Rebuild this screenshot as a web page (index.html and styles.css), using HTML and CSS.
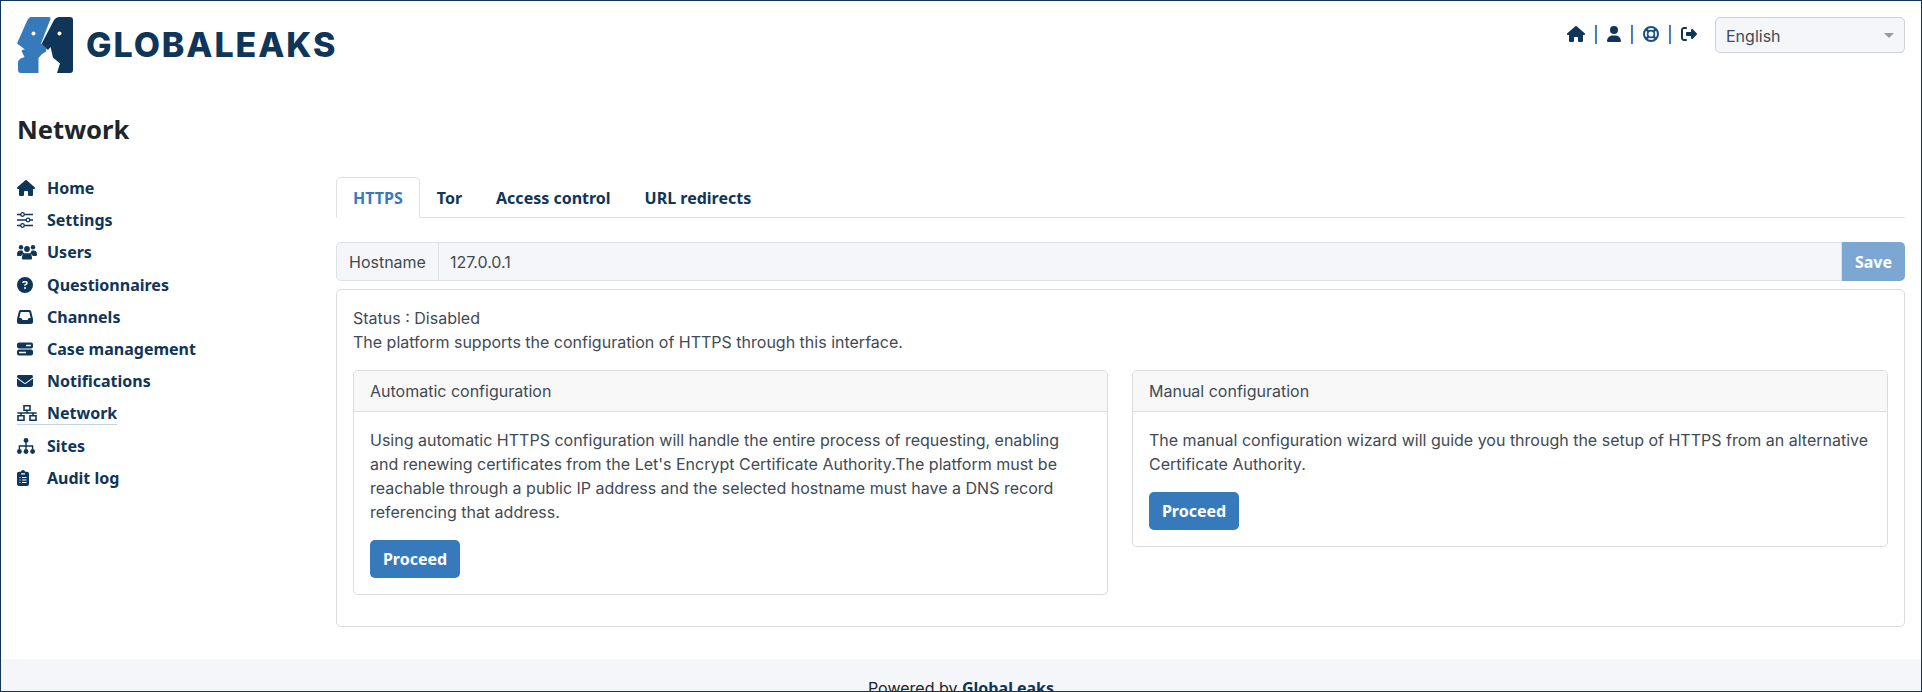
FILE: index.html
```html
<!DOCTYPE html>
<html lang="en">
<head>
<meta charset="utf-8">
<title>GlobaLeaks - Network</title>
<link rel="stylesheet" href="styles.css">
</head>
<body>
<div class="page">
  <header class="topbar">
    <a class="brand">
      <svg class="logo" viewBox="17 17 56 56" aria-hidden="true">
        <path class="logo-blue" d="M31 17H49Q51 17 50.500 19L41 43.500 46.500 48.500 46 51.500 41.500 54.500 38.500 58V73H21Q18 73 18 70V63.500Q18 60 20.500 58.500L24.500 57 21.500 51Q22 49 25 49.500L17 43.500 27 21Q29 17 31 17Z"/>
        <path class="logo-dark" d="M60 17H70Q73 17 73 20V70Q73 73 70 73H57L60 63.500 53 57.500 50.500 47 48 50 41.500 44 53 22Q55 17 60 17Z"/>
        <circle class="logo-eye" cx="33.500" cy="33.500" r="2"/>
        <circle class="logo-eye" cx="59.500" cy="33.500" r="2"/>
      </svg>
      <span class="brand-name">GLOBALEAKS</span>
    </a>
    <div class="tools">
      <nav class="tool-links">
        <svg class="ti ti-home" viewBox="0 0 576 512"><path d="M575.800 255.500c0 18-15 32.100-32 32.100h-32l.7 160.200c0 2.700-.2 5.400-.5 8.100V472c0 22.100-17.900 40-40 40H456c-1.100 0-2.200 0-3.300-.1c-1.400 .1-2.800 .1-4.200 .1H416 392c-22.100 0-40-17.900-40-40V448 384c0-17.700-14.300-32-32-32H256c-17.700 0-32 14.300-32 32v64 24c0 22.100-17.900 40-40 40H160 128.100c-1.500 0-3-.1-4.500-.2c-1.200 .1-2.400 .2-3.600 .2H104c-22.100 0-40-17.900-40-40V360c0-.9 0-1.900 .1-2.800V287.600H32c-18 0-32-14-32-32.100c0-9 3-17 10-24L266.400 8c7-7 15-8 22-8s15 2 21 7L564.800 231.500c8 7 12 15 11 24z"/></svg>
        <span class="sep">|</span>
        <svg class="ti ti-user" viewBox="0 0 448 512"><path d="M224 256A128 128 0 1 0 224 0a128 128 0 1 0 0 256zm-45.700 48C79.800 304 0 383.800 0 482.300C0 498.700 13.300 512 29.700 512H418.300c16.400 0 29.700-13.300 29.700-29.700C448 383.800 368.200 304 269.700 304H178.300z"/></svg>
        <span class="sep">|</span>
        <svg class="ti ti-ring" viewBox="0 0 16 16"><circle class="st-blue" cx="8" cy="8" r="7" stroke-width="2"/><circle class="st-blue" cx="8" cy="8" r="3.400" stroke-width="1.700"/><path class="st-blue" stroke-width="2.400" d="M3.300 3.300 5.700 5.700M12.700 3.300 10.300 5.700M3.300 12.700 5.700 10.300M12.700 12.700 10.300 10.300"/></svg>
        <span class="sep">|</span>
        <svg class="ti ti-exit" viewBox="0 0 512 512"><path d="M377.900 105.900L500.700 228.700c7.200 7.200 11.300 17.100 11.300 27.300s-4.100 20.100-11.300 27.300L377.900 406.100c-6.400 6.400-15 9.900-24 9.900c-18.700 0-33.900-15.200-33.900-33.900l0-62.100-128 0c-17.700 0-32-14.300-32-32l0-64c0-17.700 14.300-32 32-32l128 0 0-62.100c0-18.700 15.200-33.900 33.900-33.900c9 0 17.600 3.600 24 9.900zM160 96L96 96c-17.700 0-32 14.300-32 32l0 256c0 17.700 14.300 32 32 32l64 0c17.700 0 32 14.300 32 32s-14.300 32-32 32l-64 0c-53 0-96-43-96-96L0 128C0 75 43 32 96 32l64 0c17.700 0 32 14.300 32 32s-14.300 32-32 32z"/></svg>
      </nav>
      <div class="lang">English<span class="caret"></span></div>
    </div>
  </header>

  <h1 class="title">Network</h1>

  <div class="layout">
    <ul class="side">
      <li><a class="side-link"><span class="si"><svg width="18" height="16" viewBox="0 0 576 512"><path d="M575.800 255.500c0 18-15 32.100-32 32.100h-32l.7 160.200c0 2.700-.2 5.400-.5 8.100V472c0 22.100-17.900 40-40 40H456c-1.100 0-2.200 0-3.300-.1c-1.400 .1-2.800 .1-4.200 .1H416 392c-22.100 0-40-17.900-40-40V448 384c0-17.700-14.300-32-32-32H256c-17.700 0-32 14.300-32 32v64 24c0 22.100-17.900 40-40 40H160 128.100c-1.500 0-3-.1-4.500-.2c-1.200 .1-2.400 .2-3.600 .2H104c-22.100 0-40-17.900-40-40V360c0-.9 0-1.900 .1-2.800V287.600H32c-18 0-32-14-32-32.100c0-9 3-17 10-24L266.400 8c7-7 15-8 22-8s15 2 21 7L564.800 231.500c8 7 12 15 11 24z"/></svg></span>Home</a></li>
      <li><a class="side-link"><span class="si"><svg width="16" height="16" viewBox="0 0 16 16"><path class="st" stroke-width="1.400" d="M0 2.500H3.500M7.500 2.500H16M0 8H9M13 8H16M0 13.500H3.500M7.500 13.500H16"/><circle class="st" cx="5.500" cy="2.500" r="1.800" stroke-width="1.300"/><circle class="st" cx="11" cy="8" r="1.800" stroke-width="1.300"/><circle class="st" cx="5.500" cy="13.500" r="1.800" stroke-width="1.300"/></svg></span>Settings</a></li>
      <li><a class="side-link"><span class="si"><svg width="20" height="16" viewBox="0 0 20 16"><circle cx="4" cy="3.200" r="2.200"/><circle cx="16" cy="3.200" r="2.200"/><circle cx="10" cy="5" r="2.900"/><path d="M0 10C0 7.500 1.500 6.500 3.500 6.500H5.500C5.800 8 6.500 9 7.500 9.500 5.500 10 4.500 11 4.300 12H1Q0 12 0 11ZM20 10C20 7.500 18.500 6.500 16.500 6.500H14.500C14.200 8 13.500 9 12.500 9.500 14.500 10 15.500 11 15.700 12H19Q20 12 20 11ZM8 9.200H12C14 9.200 15 11 15 14.500Q15 15.500 14 15.500H6Q5 15.500 5 14.500C5 11 6 9.200 8 9.200Z"/></svg></span>Users</a></li>
      <li><a class="side-link"><span class="si"><svg width="16" height="16" viewBox="0 0 512 512"><path d="M256 512A256 256 0 1 0 256 0a256 256 0 1 0 0 512zM169.800 165.300c7.900-22.300 29.100-37.300 52.800-37.300h58.300c34.900 0 63.100 28.300 63.100 63.100c0 22.600-12.100 43.500-31.700 54.800L280 264.400c-.2 13-10.900 23.600-24 23.600c-13.300 0-24-10.700-24-24V250.500c0-8.600 4.600-16.500 12.100-20.800l44.300-25.400c4.700-2.700 7.600-7.700 7.600-13.100c0-8.400-6.800-15.100-15.100-15.100H222.600c-3.400 0-6.400 2.100-7.500 5.300l-.4 1.200c-4.400 12.500-18.200 19-30.600 14.600s-19-18.200-14.600-30.600l.4-1.200zM224 352a32 32 0 1 1 64 0 32 32 0 1 1 -64 0z"/></svg></span>Questionnaires</a></li>
      <li><a class="side-link"><span class="si"><svg width="16" height="16" viewBox="0 0 512 512"><path d="M121 32C91.600 32 66 52 58.900 80.500L1.900 308.400C.6 313.500 0 318.700 0 323.900V416c0 35.300 28.700 64 64 64H448c35.300 0 64-28.700 64-64V323.900c0-5.200-.6-10.400-1.900-15.500l-57-227.900C446 52 420.400 32 391 32H121zm0 64H391l48 192H387.800c-12.100 0-23.200 6.800-28.600 17.700l-14.300 28.600c-5.400 10.800-16.500 17.700-28.600 17.700H195.800c-12.100 0-23.200-6.800-28.600-17.700l-14.300-28.600c-5.400-10.800-16.500-17.700-28.600-17.700H73L121 96z"/></svg></span>Channels</a></li>
      <li><a class="side-link"><span class="si"><svg width="16" height="16" viewBox="0 0 16 16"><path d="M2 1.500H14Q16 1.500 16 3.500V5.500Q16 7.500 14 7.500H2Q0 7.500 0 5.500V3.500Q0 1.500 2 1.500ZM2 8.500H14Q16 8.500 16 10.500V12.500Q16 14.500 14 14.500H2Q0 14.500 0 12.500V10.500Q0 8.500 2 8.500Z"/><path class="wst" stroke-width="1.300" d="M9 4.500H14M2 11.500H9"/></svg></span>Case management</a></li>
      <li><a class="side-link"><span class="si"><svg width="16" height="16" viewBox="0 0 512 512"><path d="M48 64C21.500 64 0 85.500 0 112c0 15.100 7.100 29.300 19.200 38.400L236.800 313.600c11.400 8.500 27 8.500 38.400 0L492.800 150.400c12.100-9.100 19.200-23.300 19.200-38.400c0-26.500-21.500-48-48-48H48zM0 176V384c0 35.300 28.700 64 64 64H448c35.300 0 64-28.700 64-64V176L294.400 339.200c-22.800 17.100-54 17.100-76.800 0L0 176z"/></svg></span>Notifications</a></li>
      <li><a class="side-link current"><span class="si"><svg width="20" height="16" viewBox="0 0 20 16"><path class="st" stroke-width="1.600" d="M7 .8H13V5.200H7ZM1 10.800H7V15.200H1ZM13 10.800H19V15.200H13ZM10 5.200V8M.4 8H19.600M4 8V10.800M16 8V10.800"/></svg></span>Network</a></li>
      <li><a class="side-link"><span class="si"><svg width="18" height="16" viewBox="0 0 18 16"><circle cx="9" cy="2.400" r="2.400"/><circle cx="2.400" cy="13.500" r="2.400"/><circle cx="9" cy="13.500" r="2.400"/><circle cx="15.600" cy="13.500" r="2.400"/><path class="st" stroke-width="1.400" d="M9 4V11M2.400 11V8H15.600V11"/></svg></span>Sites</a></li>
      <li><a class="side-link"><span class="si"><svg width="12" height="16" viewBox="0 0 12 16"><path d="M2 1.800H3.800Q4.300 0 6 0T8.200 1.800H10Q12 1.800 12 3.800V14Q12 16 10 16H2Q0 16 0 14V3.800Q0 1.800 2 1.800Z"/><path class="wst" stroke-width="1.200" d="M2.500 7.500H3.500M5 7.500H9.500M2.500 10H3.500M5 10H9.500M2.500 12.500H3.500M5 12.500H9.500M4 3.800H8"/></svg></span>Audit log</a></li>
    </ul>

    <main class="content">
      <div class="tabs">
        <a class="tab active">HTTPS</a>
        <a class="tab">Tor</a>
        <a class="tab">Access control</a>
        <a class="tab">URL redirects</a>
      </div>

      <div class="input-group">
        <span class="addon">Hostname</span>
        <span class="field">127.0.0.1</span>
        <span class="save">Save</span>
      </div>

      <section class="panel">
        <p class="lead">Status : Disabled<br>The platform supports the configuration of HTTPS through this interface.</p>
        <div class="cards">
          <article class="card">
            <div class="card-head">Automatic configuration</div>
            <div class="card-body">
              <p>Using automatic HTTPS configuration will handle the entire process of requesting, enabling and renewing certificates from the Let's Encrypt Certificate Authority.The platform must be reachable through a public IP address and the selected hostname must have a DNS record referencing that address.</p>
              <a class="btn">Proceed</a>
            </div>
          </article>
          <article class="card">
            <div class="card-head">Manual configuration</div>
            <div class="card-body">
              <p>The manual configuration wizard will guide you through the setup of HTTPS from an alternative Certificate Authority.</p>
              <a class="btn">Proceed</a>
            </div>
          </article>
        </div>
      </section>
    </main>
  </div>

  <footer class="foot">Powered by <strong>GlobaLeaks</strong></footer>
</div>
</body>
</html>
```
FILE: styles.css
```css
* { box-sizing: border-box; }
html, body { margin: 0; padding: 0; }
body { font-family: Inter, "Liberation Sans", sans-serif; font-size: 16px; line-height: 24px; color: #414a55; background: #fff; }
svg { fill: #0f3558; display: block; }
.st { fill: none; stroke: #0f3558; }
.st-blue { fill: none; stroke: #1c4f80; }
.wst { fill: none; stroke: #fff; }

.page { height: 692px; border: 1px solid #0f3558; overflow: hidden; display: flex; flex-direction: column; }

.topbar { display: flex; justify-content: space-between; align-items: flex-start; padding: 16px 16px 0; height: 111px; flex: none; }
.brand { display: flex; align-items: center; gap: 13px; }
.logo { width: 56px; height: 56px; }
.logo-blue { fill: #377abc; }
.logo-dark { fill: #0f3558; }
.logo-eye { fill: #fff; }
.brand-name { font-family: Inter, sans-serif; font-weight: 800; font-size: 34px; line-height: 40px; letter-spacing: 1.900px; color: #0f3558; }

.tools { display: flex; align-items: center; gap: 18px; }
.tool-links { display: flex; align-items: center; color: #0f3558; margin-top: -2px; }
.ti-home { width: 18px; height: 16px; }
.ti-user { width: 14px; height: 16px; }
.ti-ring { width: 16px; height: 16px; }
.ti-exit { width: 16px; height: 16px; }
.sep { width: 22px; text-align: center; color: #212529; font-size: 16px; }
.lang { width: 190px; height: 36px; padding: 1px 10px 0; border: 1px solid #ced0d4; border-radius: 5px; background: #f5f6fa; display: flex; align-items: center; justify-content: space-between; color: #414a55; }
.caret { width: 0; height: 0; border-left: 5px solid transparent; border-right: 5px solid transparent; border-top: 5px solid #999; }

.title { margin: 0; padding: 0 16px; font-family: "Noto Sans", sans-serif; font-size: 25.600px; line-height: 35px; font-weight: 700; color: #212529; height: 65px; flex: none; }

.layout { display: flex; flex: none; }
.side { list-style: none; margin: 0; padding: 0 0 0 16px; width: 335px; flex: none; }
.side li { height: 32.200px; }
.side-link { display: inline-flex; align-items: center; height: 22px; font-family: "Noto Sans", sans-serif; font-weight: 700; font-size: 16px; color: #0f3558; }
.side-link.current { border-bottom: 1px solid #c3d2e6; height: 23px; }
.si { width: 30px; flex: none; }

.content { flex: 1; min-width: 0; padding: 0 16px 0 0; }
.tabs { display: flex; border-bottom: 1px solid #dee2e6; height: 41px; }
.tab { padding: 0 16px; height: 41px; display: flex; align-items: center; font-family: "Noto Sans", sans-serif; font-weight: 700; font-size: 16px; color: #0f3558; border: 1px solid transparent; }
.tab.active { color: #377abc; background: #fff; border-color: #dee2e6 #dee2e6 #fff; border-radius: 5px 5px 0 0; }

.input-group { display: flex; height: 39px; margin-top: 24px; }
.addon { padding: 0 12px; display: flex; align-items: center; border: 1px solid #dee2e6; border-radius: 5px 0 0 5px; background: #f5f6fa; }
.field { flex: 1; display: flex; align-items: center; padding: 0 11px; background: #f5f6fa; border: 1px solid #dee2e6; border-left: 0; }
.save { width: 63px; display: flex; align-items: center; justify-content: center; background: #7ba7d2; color: #fff; font-family: "Noto Sans", sans-serif; font-weight: 700; border-radius: 0 5px 5px 0; }

.panel { margin-top: 8px; padding: 16px; border: 1px solid #dcdcdc; border-radius: 5px; height: 338px; }
.lead { margin: 0 0 16px; }
.cards { display: grid; grid-template-columns: 755px 1fr; gap: 24px; align-items: start; }
.card { border: 1px solid #dcdcdc; border-radius: 5px; }
.card-head { height: 41px; padding: 0 16px; display: flex; align-items: center; background: #f8f8f8; border-bottom: 1px solid #dcdcdc; border-radius: 5px 5px 0 0; }
.card-body { padding: 16px; }
.card-body p { margin: 0 0 16px; }
.btn { display: inline-flex; align-items: center; justify-content: center; width: 90px; height: 38px; background: #377abc; color: #fff; border-radius: 5px; font-family: "Noto Sans", sans-serif; font-weight: 700; }

.foot { margin-top: 32px; flex: none; height: 60px; padding-top: 17px; background: #f5f6fa; text-align: center; color: #212529; }
.foot strong { font-family: "Noto Sans", sans-serif; color: #0f3558; }
```
